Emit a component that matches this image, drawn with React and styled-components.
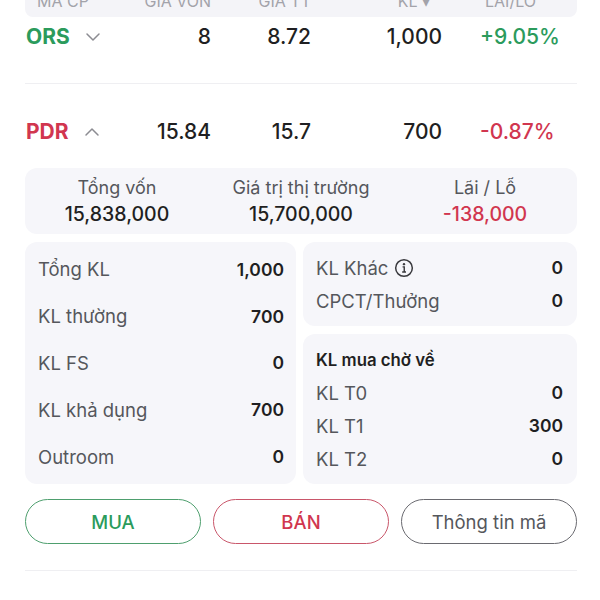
import styled, { createGlobalStyle } from 'styled-components'
import { ChevronDown, ChevronUp } from 'lucide-react'

const GREEN = '#2b9b5c'
const RED = '#d1364f'

const GlobalStyle = createGlobalStyle`
  body {
    margin: 0;
    background: #fff;
    font-family: Inter, 'Noto Sans', 'Liberation Sans', sans-serif;
    color: #1f1f22;
  }
`

const Page = styled.div`
  width: 552px;
  margin-left: 25px;
`

const cols = `105px 81px 100px 131px 1fr`

const Header = styled.div`
  display: grid;
  grid-template-columns: ${cols};
  height: 32px;
  margin-top: -15px;
  align-items: center;
  background: #f4f4f8;
  border-radius: 0 0 8px 8px;
  color: #a3a3aa;
  font-size: 16px;
  text-transform: uppercase;
`

const HeadCell = styled.div`
  text-align: ${(p) => p.$align || 'right'};
  padding-left: ${(p) => p.$pl || 0}px;
  padding-right: ${(p) => p.$pr || 0}px;
`

const Row = styled.div`
  display: grid;
  grid-template-columns: ${cols};
  align-items: center;
  padding-top: ${(p) => p.$top}px;
  padding-bottom: ${(p) => p.$bottom}px;
  border-bottom: ${(p) => (p.$line ? '1px solid #efeff2' : 'none')};
  font-size: 21px;
  line-height: 22px;
  font-weight: 500;
`

const Code = styled.div`
  display: flex;
  align-items: center;
  gap: 11px;
  height: 22px;
  padding-left: 1px;
  font-weight: 700;
  color: ${(p) => p.$color};
  svg {
    display: block;
    color: #8c8c92;
  }
`

const Num = styled.div`
  text-align: right;
  color: ${(p) => p.$color || '#1f1f22'};
`

const Pct = styled.div`
  padding-left: 38px;
  color: ${(p) => p.$color};
`

const Summary = styled.div`
  display: grid;
  grid-template-columns: repeat(3, 1fr);
  height: 66px;
  align-content: center;
  background: #f6f6fa;
  border-radius: 12px;
`

const SumCell = styled.div`
  display: flex;
  flex-direction: column;
  align-items: center;
  gap: 4px;
`

const SumLabel = styled.div`
  font-size: 18px;
  line-height: 22px;
  color: #55575c;
`

const SumValue = styled.div`
  font-size: 19.5px;
  line-height: 22px;
  font-weight: 500;
  color: ${(p) => p.$color || '#1f1f22'};
`

const Details = styled.div`
  display: grid;
  grid-template-columns: 271px 1fr;
  gap: 7px;
  margin-top: 8px;
`

const Card = styled.div`
  display: flex;
  flex-direction: column;
  background: #f6f6fa;
  border-radius: 12px;
  padding: ${(p) => p.$pad || '9px 14px 9px 13px'};
`

const Stack = styled.div`
  display: flex;
  flex-direction: column;
  gap: 8px;
`

const Line = styled.div`
  flex: ${(p) => (p.$grow ? 1 : 'none')};
  height: ${(p) => (p.$grow ? 'auto' : '33px')};
  display: flex;
  align-items: center;
  justify-content: space-between;
`

const Label = styled.div`
  display: flex;
  align-items: center;
  gap: 6px;
  font-size: 18.5px;
  color: #55575c;
`

const Title = styled.div`
  font-size: 16.8px;
  font-weight: 600;
  color: #1f1f22;
`

const Value = styled.div`
  font-size: 17.5px;
  font-weight: 600;
  color: #1f1f22;
`

const Actions = styled.div`
  display: grid;
  grid-template-columns: repeat(3, 1fr);
  gap: 12px;
  margin-top: 15px;
`

const Button = styled.button`
  height: 45px;
  border-radius: 23px;
  background: #fff;
  border: 1.5px solid ${(p) => p.$border};
  color: ${(p) => p.$color};
  font-family: inherit;
  font-size: 18.5px;
  font-weight: ${(p) => p.$weight || 500};
`

const Divider = styled.div`
  height: 1px;
  background: #efeff2;
  margin-top: 26px;
`

const InfoIcon = () => (
  <svg width="20" height="20" viewBox="0 0 24 24" fill="none">
    <circle cx="12" cy="12" r="10" stroke="#3a3a3e" strokeWidth="1.8" />
    <circle cx="12" cy="7.4" r="1.4" fill="#3a3a3e" />
    <path d="M10.3 10.6h2v6.2M9.8 16.8h4.6" stroke="#3a3a3e" strokeWidth="1.7" />
  </svg>
)

const leftRows = [
  ['Tổng KL', '1,000'],
  ['KL thường', '700'],
  ['KL FS', '0'],
  ['KL khả dụng', '700'],
  ['Outroom', '0'],
]

const pendingRows = [
  ['KL T0', '0'],
  ['KL T1', '300'],
  ['KL T2', '0'],
]

const App = () => {
  return (
    <Page>
      <GlobalStyle />
      <Header>
        <HeadCell $align='left' $pl={12}>Mã CP</HeadCell>
        <HeadCell>Giá vốn</HeadCell>
        <HeadCell>Giá TT</HeadCell>
        <HeadCell $pr={12}>KL ▾</HeadCell>
        <HeadCell $align='left' $pl={43}>Lãi/Lỗ</HeadCell>
      </Header>

      <Row $top={9} $bottom={35} $line>
        <Code $color={GREEN}>
          ORS <ChevronDown size={24} strokeWidth={1.5} />
        </Code>
        <Num>8</Num>
        <Num>8.72</Num>
        <Num>1,000</Num>
        <Pct $color={GREEN}>+9.05%</Pct>
      </Row>

      <Row $top={37} $bottom={25}>
        <Code $color={RED}>
          PDR <ChevronUp size={24} strokeWidth={1.5} />
        </Code>
        <Num>15.84</Num>
        <Num>15.7</Num>
        <Num>700</Num>
        <Pct $color={RED}>-0.87%</Pct>
      </Row>

      <Summary>
        <SumCell>
          <SumLabel>Tổng vốn</SumLabel>
          <SumValue>15,838,000</SumValue>
        </SumCell>
        <SumCell>
          <SumLabel>Giá trị thị trường</SumLabel>
          <SumValue>15,700,000</SumValue>
        </SumCell>
        <SumCell>
          <SumLabel>Lãi / Lỗ</SumLabel>
          <SumValue $color={RED}>-138,000</SumValue>
        </SumCell>
      </Summary>

      <Details>
        <Card $pad='4px 12px 4px 13px'>
          {leftRows.map(([k, v]) => (
            <Line key={k} $grow>
              <Label>{k}</Label>
              <Value>{v}</Value>
            </Line>
          ))}
        </Card>
        <Stack>
          <Card>
            <Line>
              <Label>
                KL Khác <InfoIcon />
              </Label>
              <Value>0</Value>
            </Line>
            <Line>
              <Label>CPCT/Thưởng</Label>
              <Value>0</Value>
            </Line>
          </Card>
          <Card>
            <Line>
              <Title>KL mua chờ về</Title>
            </Line>
            {pendingRows.map(([k, v]) => (
              <Line key={k}>
                <Label>{k}</Label>
                <Value>{v}</Value>
              </Line>
            ))}
          </Card>
        </Stack>
      </Details>

      <Actions>
        <Button $border='#4e9f6e' $color={GREEN}>MUA</Button>
        <Button $border='#c9566a' $color={RED}>BÁN</Button>
        <Button $border='#6a6a70' $color='#55575c' $weight={400}>Thông tin mã</Button>
      </Actions>
      <Divider />
    </Page>
  )
}

export default App
